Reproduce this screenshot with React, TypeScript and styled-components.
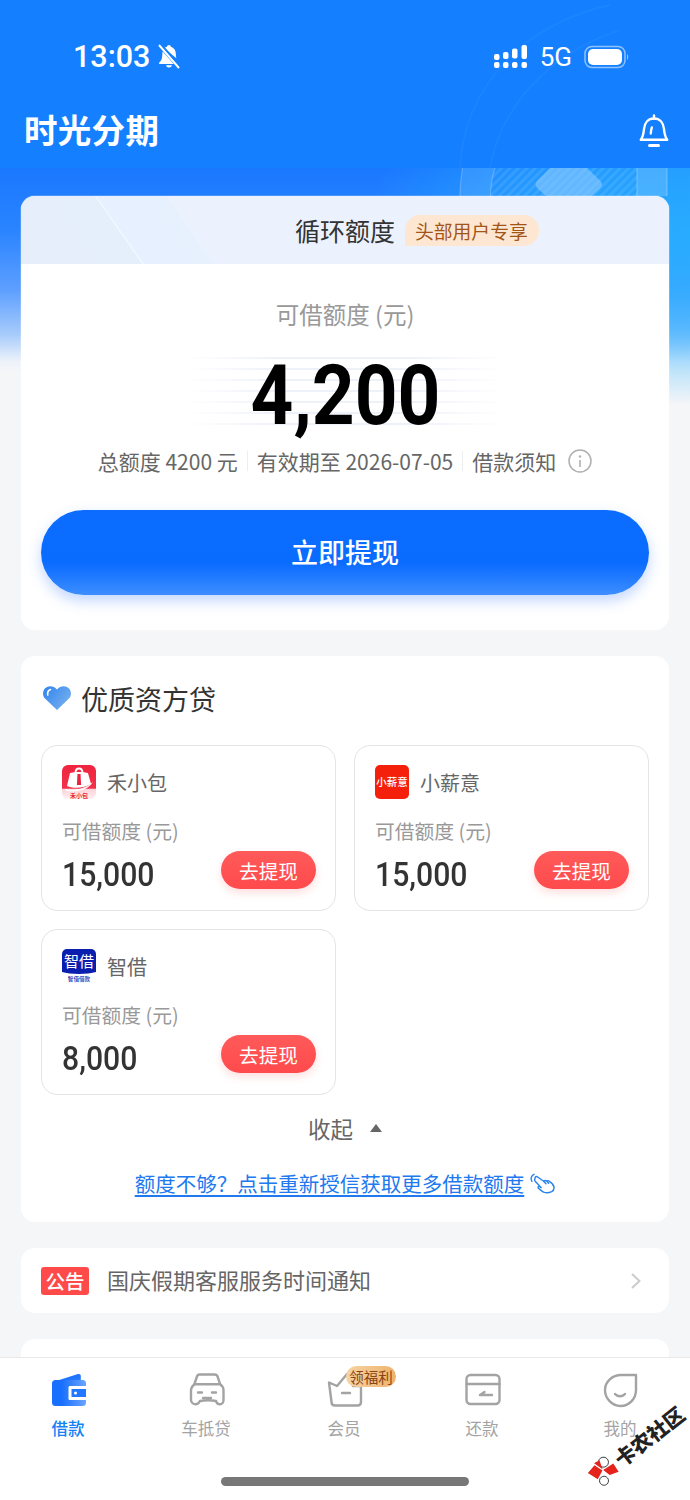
import React from 'react'
import styled, { createGlobalStyle } from 'styled-components'

const CJK = '"Noto Sans CJK SC", "Noto Sans", sans-serif'
const NUM = 'Roboto, "Noto Sans CJK SC", sans-serif'

const GlobalStyle = createGlobalStyle`
  html, body { margin: 0; padding: 0; background: #f5f6f8; }
  * { box-sizing: border-box; }
  body { font-family: ${CJK}; }
`

const Page = styled.div`
  position: relative;
  width: 690px;
  height: 1500px;
  overflow: hidden;
  display: flex;
  flex-direction: column;
`

const Scroll = styled.main`
  position: relative;
  flex: 1;
  min-height: 0;
  overflow: hidden;
  background:
    radial-gradient(ellipse 330px 170px at 690px 235px, rgba(40, 175, 255, 0.95) 0, rgba(40, 175, 255, 0.6) 55%, rgba(40, 175, 255, 0) 100%),
    linear-gradient(180deg, #1a78ff 168px, #2a84ff 230px, #5d9fff 290px, #a8ccfb 335px, #eef3fa 362px, #f5f6f8 372px);
`

const TopBar = styled.header`
  position: relative;
  height: 168px;
  background: #1580ff;
`

const TopDecor = styled.svg`
  position: absolute;
  left: 440px;
  top: 0;
  width: 250px;
  height: 168px;
`

const HeroDecor = styled.svg`
  position: absolute;
  left: 440px;
  top: 168px;
  width: 250px;
  height: 28px;
`

const StatusBar = styled.div`
  position: relative;
  height: 100px;
  padding: 12px 60px 0 73px;
  display: flex;
  align-items: center;
  justify-content: space-between;
  color: #fff;
`

const StatusLeft = styled.div`
  display: flex;
  align-items: center;
  gap: 6px;
  font-family: ${NUM};
  font-size: 30.5px;
  font-weight: 500;
`

const StatusRight = styled.div`
  display: flex;
  align-items: center;
  gap: 12px;
  padding-top: 1px;
  font-family: ${NUM};
  font-size: 26px;
  font-weight: 400;
`

const NavBar = styled.div`
  position: relative;
  height: 62px;
  padding: 0 21px 0 24px;
  display: flex;
  align-items: center;
  justify-content: space-between;
`

const Brand = styled.h1`
  margin: 0 0 4px;
  color: #fff;
  font-size: 33.5px;
  line-height: 1;
  font-weight: 700;
  letter-spacing: 0.3px;
`

const Stack = styled.div`
  position: relative;
  padding: 28px 21px 0;
  display: flex;
  flex-direction: column;
  gap: 26px;
`

const Card = styled.section`
  background: #fff;
  border-radius: 14px;
  overflow: hidden;
`

const QuotaCard = styled(Card)`
  box-shadow: 0 0 0 1px rgba(255, 255, 255, 0.18);
`

const QuotaHead = styled.div`
  height: 68px;
  display: flex;
  align-items: center;
  gap: 10px;
  padding-left: 274px;
  background: linear-gradient(
    55deg,
    #e6eefa 0,
    #e5eefb 99px,
    #f6faff 100px,
    #e6f0fe 101px,
    #e7f1fe 157px,
    #ebf2fe 159px,
    #ebf2fe 100%
  );
`

const QuotaTitle = styled.span`
  font-size: 25px;
  line-height: 32px;
  color: #333;
`

const UserTag = styled.span`
  height: 31px;
  padding: 0 11px 0 10px;
  display: inline-flex;
  align-items: center;
  background: #fde7d2;
  color: #a25518;
  font-size: 18.8px;
  border-radius: 15px 15px 15px 0;
`

const QuotaBody = styled.div`
  height: 366px;
  padding: 34px 20px 0;
  display: flex;
  flex-direction: column;
  align-items: center;
`

const AmountLabel = styled.div`
  font-size: 23.5px;
  line-height: 32px;
  color: #999;
`

const AmountRow = styled.div`
  position: relative;
  width: 320px;
  height: 74px;
  margin-top: 27px;
  padding-top: 4px;
  display: flex;
  align-items: center;
  justify-content: center;

  &::before {
    content: '';
    position: absolute;
    inset: 0;
    background: repeating-linear-gradient(180deg, #edf1f8 0 2px, transparent 2px 11px);
    -webkit-mask-image: linear-gradient(90deg, transparent, #000 30%, #000 70%, transparent);
    mask-image: linear-gradient(90deg, transparent, #000 30%, #000 70%, transparent);
  }
`

const AmountValue = styled.div`
  position: relative;
  font-family: ${NUM};
  font-size: 83px;
  line-height: 70px;
  font-weight: 700;
  color: #000;
  transform: scaleX(0.9);
`

const MetaRow = styled.div`
  margin-top: 15px;
  height: 30px;
  display: flex;
  align-items: center;
  gap: 9px;
  font-size: 21px;
  color: #666;
`

const MetaDivider = styled.i`
  width: 1px;
  height: 20px;
  background: #eee;
`

const PrimaryButton = styled.button`
  width: 608px;
  height: 85px;
  margin-top: 34px;
  padding-bottom: 3px;
  border: 0;
  border-radius: 43px;
  color: #fff;
  font-family: ${CJK};
  font-size: 27px;
  font-weight: 500;
  background: linear-gradient(180deg, #0b6cff 0, #0a6bff 62%, #3d8eff 100%);
  box-shadow: 0 6px 14px rgba(40, 110, 255, 0.28);
`

const LoanPanel = styled(Card)`
  padding: 22px 20px 0;
  height: 566px;
`

const PanelTitle = styled.h2`
  margin: 0;
  padding-left: 2px;
  height: 40px;
  display: flex;
  align-items: center;
  gap: 10px;
  font-size: 27px;
  font-weight: 400;
  color: #333;
`

const LoanGrid = styled.div`
  margin-top: 27px;
  display: grid;
  grid-template-columns: 295px 295px;
  gap: 18px;
`

const LoanCard = styled.article`
  height: 166px;
  padding: 19px 19px 0 20px;
  border: 1px solid #e4e4e6;
  border-radius: 16px;
`

const LoanHead = styled.div`
  display: flex;
  align-items: center;
  gap: 11px;
  height: 34px;
  font-size: 20px;
  color: #666;
`

const LoanLabel = styled.div`
  margin-top: 18px;
  height: 28px;
  line-height: 28px;
  font-size: 19.8px;
  color: #999;
`

const LoanFoot = styled.div`
  margin-top: 5px;
  display: flex;
  align-items: flex-start;
  justify-content: space-between;
`

const LoanValue = styled.div`
  margin-top: 3px;
  font-family: ${NUM};
  font-size: 33.5px;
  line-height: 44px;
  font-weight: 500;
  color: #333;
  transform: scaleX(0.9);
  transform-origin: 0 50%;
`

const DrawButton = styled.button`
  width: 95px;
  height: 38px;
  margin-top: 1px;
  border: 0;
  border-radius: 19px;
  color: #fff;
  font-family: ${CJK};
  font-size: 19.6px;
  background: linear-gradient(180deg, #ff5a5a, #ff4a4c);
  box-shadow: 0 4px 8px rgba(255, 80, 80, 0.18);
`

const Collapse = styled.div`
  margin-top: 16px;
  height: 34px;
  display: flex;
  align-items: center;
  justify-content: center;
  gap: 17px;
  color: #666;
  font-size: 22.5px;
`

const Triangle = styled.i`
  width: 0;
  height: 0;
  border-left: 6px solid transparent;
  border-right: 6px solid transparent;
  border-bottom: 8px solid #666;
`

const CreditLink = styled.div`
  margin-top: 24px;
  display: flex;
  align-items: center;
  justify-content: center;
  gap: 6px;
  color: #2079ee;
  font-size: 20.5px;
  line-height: 28px;
`

const Underlined = styled.span`
  text-decoration: underline;
  text-underline-offset: 3px;
`

const Notice = styled(Card)`
  height: 65px;
  padding: 0 28px 0 20px;
  display: flex;
  align-items: center;
`

const NoticeTag = styled.span`
  width: 48px;
  height: 28px;
  display: flex;
  align-items: center;
  justify-content: center;
  border-radius: 3px;
  background: #ff4a4a;
  color: #fff;
  font-size: 19.5px;
  font-weight: 500;
`

const NoticeText = styled.span`
  margin-left: 18px;
  padding-bottom: 4px;
  flex: 1;
  font-size: 22px;
  color: #666;
`

const EmptyCard = styled(Card)`
  height: 120px;
`

const TabBar = styled.nav`
  position: relative;
  height: 143px;
  flex: none;
  padding-top: 14px;
  display: grid;
  grid-template-columns: repeat(5, 1fr);
  align-items: start;
  background: #fff;
  border-top: 1px solid #e9e9ea;
`

const Tab = styled.div<{ $active?: boolean }>`
  position: relative;
  display: flex;
  flex-direction: column;
  align-items: center;
  gap: 8px;
  font-size: 16.5px;
  line-height: 24px;
  font-weight: ${(p) => (p.$active ? 500 : 400)};
  color: ${(p) => (p.$active ? '#1481f5' : '#a3a3a3')};
`

const TabIcon = styled.span`
  width: 36px;
  height: 36px;
  display: flex;
  align-items: center;
  justify-content: center;
`

const TabLabel = styled.span`
  padding-right: 2px;
`

const TabBadge = styled.span`
  position: absolute;
  left: 70px;
  top: -6px;
  width: 50px;
  height: 21px;
  display: flex;
  align-items: center;
  justify-content: center;
  border-radius: 11px;
  font-size: 14.5px;
  font-weight: 400;
  color: #8b4513;
  background: linear-gradient(90deg, #f7d3a4, #edb36c);
`

const HomeIndicator = styled.i`
  position: absolute;
  left: 221px;
  top: 119px;
  width: 248px;
  height: 9px;
  border-radius: 5px;
  background: #777;
`

const Watermark = styled.div`
  position: absolute;
  left: 592px;
  top: 1433px;
  display: flex;
  align-items: center;
  gap: 1px;
  transform: rotate(-38deg);
  transform-origin: 0 50%;
  translate: 0 34px;
  font-size: 20.5px;
  line-height: 26px;
  font-weight: 900;
  color: #222;
  white-space: nowrap;
`

const MutedBell = () => (
  <svg width="26" height="26" viewBox="0 0 26 26" fill="#fff">
    <path d="M13 2c1 0 1.800.7 1.900 1.800 2.900.9 4.900 3.500 4.900 6.900 0 1.900.2 3.400.6 4.600L8.100 5.200c.8-.7 1.700-1.100 2.800-1.400C11.100 2.700 12 2 13 2zM6.700 8.400l11 12.600H3.800c-.8 0-1.100-.9-.5-1.400 1.700-1.600 3-3.800 3-7.700 0-1.200.1-2.400.4-3.500zM10 22.300h6c-.4 1.400-1.600 2.200-3 2.200s-2.600-.8-3-2.200z" />
    <path d="M3 2l20 23" stroke="#fff" strokeWidth="2" fill="none" />
    <path d="M5 1l20 23" stroke="#1580ff" strokeWidth="1.600" fill="none" />
  </svg>
)

const Signal = () => (
  <svg width="34" height="24" viewBox="0 0 34 24" fill="#fff">
    <rect x="0" y="9" width="5.500" height="6" rx="2" />
    <rect x="0" y="17" width="5.500" height="6" rx="2" />
    <rect x="9" y="7" width="5.500" height="7" rx="2" />
    <rect x="9" y="17" width="5.500" height="6" rx="2" />
    <rect x="18" y="3.500" width="5.500" height="10" rx="2" />
    <rect x="18" y="17" width="5.500" height="6" rx="2" />
    <rect x="27.500" y="0" width="5.500" height="14" rx="2" />
    <rect x="27.500" y="17" width="5.500" height="6" rx="2" />
  </svg>
)

const Battery = () => (
  <svg width="46" height="24" viewBox="0 0 46 24">
    <rect x="1" y="1.500" width="40" height="21" rx="7" fill="none" stroke="#8fc0ff" strokeWidth="1.500" />
    <rect x="4" y="4" width="34" height="16" rx="5" fill="#fff" />
    <path d="M43 9c1.600.6 1.600 5.400 0 6z" fill="#8fc0ff" />
  </svg>
)

const NavBell = () => (
  <svg width="30" height="34" viewBox="0 0 30 34" fill="none" stroke="#fff" strokeWidth="2.400" strokeLinejoin="round" strokeLinecap="round">
    <path d="M15 1.500v3" />
    <path d="M15 4.500c-6 0-9.500 4.500-10 10.500-.4 4.500-1.200 8-3.200 10.800h26.400c-2-2.800-2.800-6.300-3.200-10.800-.5-6-4-10.500-10-10.500z" />
    <path d="M12.800 13.500c-.6 2-.9 4-1 6" />
    <path d="M10.500 31.500h9" strokeWidth="3" />
  </svg>
)

const InfoIcon = () => (
  <svg width="24" height="24" viewBox="0 0 24 24" fill="none" style={{ marginLeft: 3 }}>
    <circle cx="12" cy="12" r="11" stroke="#b0b0b0" strokeWidth="1.500" />
    <circle cx="12" cy="7.500" r="1.200" fill="#b0b0b0" />
    <path d="M12 11v7" stroke="#b0b0b0" strokeWidth="1.600" />
  </svg>
)

const Heart = () => (
  <svg width="28" height="24" viewBox="0 0 28 24">
    <defs>
      <linearGradient id="heartFill" x1="0" y1="0" x2="1" y2="0.6">
        <stop offset="0" stopColor="#2f83ee" />
        <stop offset="1" stopColor="#74aeee" />
      </linearGradient>
    </defs>
    <path d="M14 24 2 12.500C-.8 9.500-.5 4.800 2.200 2.200 5.200-.7 10.500-.7 14 3.400 17.500-.7 22.800-.7 25.800 2.200 28.500 4.800 28.800 9.500 26 12.500z" fill="url(#heartFill)" />
    <path d="M7.500 3.500C5.200 4.300 4.300 6.500 4.800 9" fill="none" stroke="#fff" strokeWidth="1.600" strokeLinecap="round" />
  </svg>
)

const BagLogo = () => (
  <svg width="34" height="34" viewBox="0 0 34 34">
    <defs>
      <linearGradient id="bagFill" x1="0" y1="0" x2="0" y2="1">
        <stop offset="0" stopColor="#f0243f" />
        <stop offset="0.68" stopColor="#f2304a" />
        <stop offset="0.72" stopColor="#fbd3d8" />
        <stop offset="1" stopColor="#fff1f2" />
      </linearGradient>
    </defs>
    <rect width="34" height="34" rx="6" fill="url(#bagFill)" />
    <path d="M8 8c3-1.500 15-1.500 18 0l3 11c-6 4-18 5-24 2z" fill="#fff" />
    <path d="M13.500 8c0-6 7-6 7 0" fill="none" stroke="#fff" strokeWidth="1.800" />
    <path d="M15.500 9h3l.6 11h-4.200z" fill="#e8233d" />
    <path d="M3 24c9 2 20 0 28-7-4 7-14 11-27 9z" fill="#fff" opacity=".9" />
    <text x="17" y="32.500" textAnchor="middle" fontSize="6" fontWeight="700" fill="#e8233d">禾小包</text>
  </svg>
)

const SalaryLogo = () => (
  <svg width="34" height="34" viewBox="0 0 34 34">
    <rect width="34" height="34" rx="5" fill="#f5200c" />
    <text x="17" y="21" textAnchor="middle" fontSize="10.500" fontWeight="500" fill="#fff">小薪意</text>
  </svg>
)

const BorrowLogo = () => (
  <svg width="34" height="34" viewBox="0 0 34 34">
    <rect width="34" height="34" rx="5" fill="#fff" />
    <path d="M5 0h24a5 5 0 0 1 5 5v18c-8 2.500-26 2.500-34 0V5a5 5 0 0 1 5-5z" fill="#0a1fae" />
    <text x="17" y="18" textAnchor="middle" fontSize="15" fontWeight="400" fill="#fff">智借</text>
    <text x="17" y="32" textAnchor="middle" fontSize="5.600" fontWeight="500" fill="#1a2bb0">智借借款</text>
  </svg>
)

const HandIcon = () => (
  <svg width="25" height="21" viewBox="0 0 25 21" fill="none" stroke="#2b82ee" strokeWidth="1.400" strokeLinejoin="round" strokeLinecap="round">
    <path d="M5.200 4.200c.7-.8 1.700-.8 2.500-.2l6 4.300c.8-.9 2-1 3-.3.800-.5 1.900-.4 2.600.3 2.300 1.200 4.200 3.300 4.700 5.700.3 2-.6 3.700-2.300 4.600-2.500 1.200-5.500 1.400-8 .5-1.200-.5-2-1.200-3-2l-2.300-1.900c-1-.9.300-2.200 1.300-1.500l1.500 1-6-6.500c-.7-.8-.9-1.600 0-3.500z" />
    <path d="M2 8.500C.3 5.800 1.300 2.300 4 1.300" />
    <path d="M13.700 8.300l2.300 2.500M16.700 8l2 2.300" />
  </svg>
)

const Chevron = () => (
  <svg width="10" height="16" viewBox="0 0 10 16" fill="none" stroke="#ccc" strokeWidth="2">
    <path d="M1 1l7.500 7L1 15" />
  </svg>
)

const WalletTab = () => (
  <svg width="36" height="36" viewBox="0 0 36 36">
    <defs>
      <linearGradient id="walletBack" x1="0" y1="0" x2="1" y2="1">
        <stop offset="0" stopColor="#0a63ff" />
        <stop offset="1" stopColor="#2f80ff" />
      </linearGradient>
      <linearGradient id="walletFront" x1="0" y1="0" x2="1" y2="0">
        <stop offset="0.3" stopColor="#1970ff" />
        <stop offset="1" stopColor="#6ba5ff" />
      </linearGradient>
    </defs>
    <path d="M2 10 27 2c1.500-.4 2.800.6 2.800 2v6z" fill="url(#walletBack)" />
    <rect x="1" y="8" width="34" height="26" rx="3.500" fill="url(#walletFront)" />
    <path d="M35 14H19c-1 0-1.500.6-1.500 1.500v11c0 1 .5 1.500 1.500 1.500h16z" fill="#fff" />
    <path d="M35 17H20.500v8H35z" fill="#2276ff" />
    <circle cx="24.500" cy="21" r="1.500" fill="#fff" />
  </svg>
)

const CarTab = () => (
  <svg width="36" height="36" viewBox="0 0 36 36" fill="none" stroke="#a3a3a3" strokeWidth="2.400" strokeLinejoin="round" strokeLinecap="round">
    <path d="M10.500 2.500h15c1.500 0 2.700.8 3.200 2.300l2.500 7.500c2 1.500 3.300 3.500 3.300 6v10c0 2-1.500 4-3.500 4s-3.500-1-4-3.300c-5-.9-11-.9-16 0C10 31 8.500 32.300 6.500 32.300S2.500 30.500 2 28.500v-10c0-2.500 1.300-4.500 3.300-6l2.500-7.500c.4-1.500 1.200-2.500 2.700-2.500z" />
    <path d="M5.500 12.300h25" />
    <path d="M9 20.500h4M23 20.500h4" />
    <path d="M14 26h8" />
  </svg>
)

const BasketTab = () => (
  <svg width="36" height="36" viewBox="0 0 36 36" fill="none" stroke="#a3a3a3" strokeWidth="2.400" strokeLinejoin="round" strokeLinecap="round">
    <path d="M2 10.500l8 3.500L20 2l6 12h8v16c0 2-1.300 3.500-3.500 3.500H8c-2.200 0-3.500-1.500-3.500-3.500z" />
    <path d="M15 21h8" />
  </svg>
)

const RepayTab = () => (
  <svg width="36" height="34" viewBox="0 0 36 34" fill="none" stroke="#a3a3a3" strokeWidth="2.400" strokeLinejoin="round" strokeLinecap="round">
    <rect x="1.500" y="2" width="33" height="29" rx="4" />
    <path d="M1.500 11h33" />
    <path d="M15 22h12M15 22l4.500-3" />
  </svg>
)

const MineTab = () => (
  <svg width="36" height="36" viewBox="0 0 36 36" fill="none" stroke="#a3a3a3" strokeWidth="2.400" strokeLinejoin="round" strokeLinecap="round">
    <path d="M33 3H18C9.500 3 2 9.500 2 18s7 16 15.500 16S33 27 33 18z" />
    <path d="M12 22c2.500 3 7.500 3 10 0" />
  </svg>
)

const WatermarkLogo = () => (
  <svg width="30" height="26" viewBox="0 0 30 26">
    <circle cx="20" cy="6" r="5" fill="#fff" stroke="#222" strokeWidth="0.800" />
    <circle cx="9" cy="21" r="4.500" fill="#fff" stroke="#222" strokeWidth="0.800" />
    <path d="M1 5l10-2 3 9-9 4zM15 12l12 1-1 10-9-3zM12 1l6 1-3 9z" fill="#e3231c" />
  </svg>
)

const loans = [
  { name: '禾小包', value: '15,000', logo: <BagLogo /> },
  { name: '小薪意', value: '15,000', logo: <SalaryLogo /> },
  { name: '智借', value: '8,000', logo: <BorrowLogo /> }
]

export default function App() {
  return (
    <Page>
      <GlobalStyle />
      <Scroll>
        <HeroDecor viewBox="0 0 250 28" fill="none">
          <defs>
            <pattern id="hatch" width="6" height="6" patternUnits="userSpaceOnUse" patternTransform="rotate(45)">
              <rect width="3" height="6" fill="rgba(255,255,255,0.09)" />
            </pattern>
          </defs>
          <path d="M22.500 0C21 9 20 18 20 28h30.500C50.500 18 52 9 55 0z" fill="rgba(255,255,255,0.1)" />
          <path d="M55 0C52 9 50.500 18 50.500 28H197V0z" fill="url(#hatch)" />
          <path d="M197 0h30v28h-30z" fill="rgba(255,255,255,0.16)" />
          <path d="M110 0h37l13.500 13c2 2 2 5 0 7l-9 8H106l-9-8c-2-2-2-5 0-7z" fill="rgba(150,205,255,0.55)" />
          <path d="M22.500 0C21 9 20 18 20 28M55 0C52 9 50.500 18 50.500 28" stroke="rgba(255,255,255,0.22)" strokeWidth="1.200" />
          <path d="M197 0v28M227 0v28" stroke="rgba(255,255,255,0.3)" strokeWidth="1" />
        </HeroDecor>
        <TopBar>
          <TopDecor viewBox="0 0 250 168" fill="none" stroke="rgba(255,255,255,0.04)" strokeWidth="1.500">
            <path d="M20 168C24 90 80 25 170 5" />
            <path d="M50 168C60 110 105 55 180 30" />
          </TopDecor>
          <StatusBar>
            <StatusLeft>
              13:03
              <MutedBell />
            </StatusLeft>
            <StatusRight>
              <Signal />
              5G
              <Battery />
            </StatusRight>
          </StatusBar>
          <NavBar>
            <Brand>时光分期</Brand>
            <NavBell />
          </NavBar>
        </TopBar>
        <Stack>
          <QuotaCard>
            <QuotaHead>
              <QuotaTitle>循环额度</QuotaTitle>
              <UserTag>头部用户专享</UserTag>
            </QuotaHead>
            <QuotaBody>
              <AmountLabel>可借额度 (元)</AmountLabel>
              <AmountRow>
                <AmountValue>4,200</AmountValue>
              </AmountRow>
              <MetaRow>
                <span>总额度 4200 元</span>
                <MetaDivider />
                <span>有效期至 2026-07-05</span>
                <MetaDivider />
                <span>借款须知</span>
                <InfoIcon />
              </MetaRow>
              <PrimaryButton>立即提现</PrimaryButton>
            </QuotaBody>
          </QuotaCard>
          <LoanPanel>
            <PanelTitle>
              <Heart />
              优质资方贷
            </PanelTitle>
            <LoanGrid>
              {loans.map((loan) => (
                <LoanCard key={loan.name}>
                  <LoanHead>
                    {loan.logo}
                    {loan.name}
                  </LoanHead>
                  <LoanLabel>可借额度 (元)</LoanLabel>
                  <LoanFoot>
                    <LoanValue>{loan.value}</LoanValue>
                    <DrawButton>去提现</DrawButton>
                  </LoanFoot>
                </LoanCard>
              ))}
            </LoanGrid>
            <Collapse>
              收起
              <Triangle />
            </Collapse>
            <CreditLink>
              <Underlined>额度不够？点击重新授信获取更多借款额度</Underlined>
              <HandIcon />
            </CreditLink>
          </LoanPanel>
          <Notice>
            <NoticeTag>公告</NoticeTag>
            <NoticeText>国庆假期客服服务时间通知</NoticeText>
            <Chevron />
          </Notice>
          <EmptyCard />
        </Stack>
      </Scroll>
      <TabBar>
        <Tab $active>
          <TabIcon><WalletTab /></TabIcon>
          <TabLabel>借款</TabLabel>
        </Tab>
        <Tab>
          <TabIcon><CarTab /></TabIcon>
          <TabLabel>车抵贷</TabLabel>
        </Tab>
        <Tab>
          <TabIcon><BasketTab /></TabIcon>
          <TabBadge>领福利</TabBadge>
          <TabLabel>会员</TabLabel>
        </Tab>
        <Tab>
          <TabIcon><RepayTab /></TabIcon>
          <TabLabel>还款</TabLabel>
        </Tab>
        <Tab>
          <TabIcon><MineTab /></TabIcon>
          <TabLabel>我的</TabLabel>
        </Tab>
        <HomeIndicator />
      </TabBar>
      <Watermark>
        <WatermarkLogo />
        卡农社区
      </Watermark>
    </Page>
  )
}
